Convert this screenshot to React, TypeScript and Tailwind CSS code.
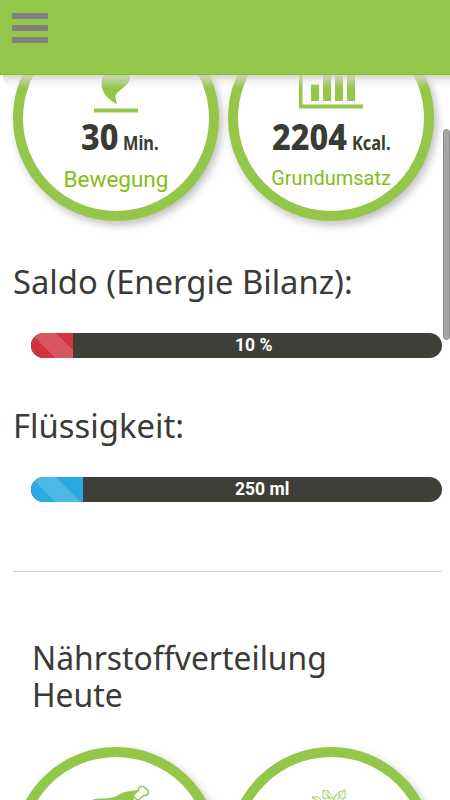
import type { ReactNode } from "react";

const stripes =
  "bg-[linear-gradient(45deg,rgba(255,255,255,0.17)_25%,transparent_25%,transparent_50%,rgba(255,255,255,0.17)_50%,rgba(255,255,255,0.17)_75%,transparent_75%)] bg-[length:50px_50px]";

const heading =
  "w-max origin-left font-['Noto_Sans',sans-serif] text-[33.500px] whitespace-nowrap";

function Circle({ children }: { children?: ReactNode }) {
  return (
    <div className="flex h-[206px] w-[206px] shrink-0 flex-col items-center rounded-full border-[10px] border-[#94c64a] bg-white shadow-[3px_4px_8px_rgba(0,0,0,0.25)]">
      {children}
    </div>
  );
}

function FlameIcon() {
  return (
    <svg className="mt-[29px] h-[60px] w-[46px] shrink-0" viewBox="0 0 46 60" fill="#94c64a">
      <path d="M24.500 50.500C15 45.500 8.500 39 8.500 30C8.500 25 10 22 13 19C17 14 20 9 20 3C27 10 36 14 37 22C37.500 33 22.500 36 22.500 43C22.500 46 23.500 48 24.500 50.500Z" />
      <path d="M1 54.600H45V58.600H1Z" />
    </svg>
  );
}

function ChartIcon() {
  return (
    <svg className="mt-[29px] h-[60px] w-[66px] shrink-0" viewBox="0 0 66 60" fill="#94c64a">
      <path d="M1 3H4.500V50.500H65V54.500H1Z" />
      <path d="M13 30.500H21V47H13ZM25 12H33V47H25ZM37 22H45V47H37ZM49 10H57V47H49Z" />
    </svg>
  );
}

function ProgressBar({ label, percent, color }: { label: string; percent: number; color: string }) {
  return (
    <div className="relative ml-[18px] h-[25px] overflow-hidden rounded-full bg-[#3f3f39]">
      <div className={`h-full ${color} ${stripes}`} style={{ width: `${percent}%` }} />
      <span className="absolute inset-0 pl-[204px] text-[17.500px] leading-[24px] font-bold whitespace-nowrap text-white">
        {label}
      </span>
    </div>
  );
}

export default function App() {
  return (
    <div className="relative h-[800px] w-[450px] overflow-hidden bg-white font-[Roboto,sans-serif] text-[#3a3b35]">
      <header className="relative z-10 h-[75px] border-b border-[#84bd18] bg-[#94c64a] px-[12px] pt-[13px]">
        <button className="flex w-9 flex-col gap-[6px]" aria-label="Menu">
          <span className="h-[6px] w-full rounded-[1px] bg-[#808080]" />
          <span className="h-[6px] w-full rounded-[1px] bg-[#808080]" />
          <span className="h-[6px] w-full rounded-[1px] bg-[#808080]" />
        </button>
        <div className="absolute top-[75px] right-0 left-[3px] h-[13px] rounded-bl-xl bg-linear-to-b from-[#d2d2d2]/85 via-[#dedede]/40 to-transparent" />
      </header>

      <main className="pr-[8px] pl-[13px]">
        <section className="-mt-[60px] flex gap-[9px]">
          <Circle>
            <FlameIcon />
            <p className="mt-[1px] flex h-[46px] items-baseline gap-[5px] pl-2 font-['Noto_Sans',sans-serif] font-extrabold whitespace-nowrap">
              <span className="inline-block w-[37px]">
                <span className="inline-block origin-left scale-x-[0.9] text-[36px] leading-[44px]">30</span>
              </span>
              <span className="inline-block w-[36px]">
                <span className="inline-block origin-left scale-x-[0.86] text-[19px] font-bold">Min.</span>
              </span>
            </p>
            <p className="text-[22.500px] leading-[36px] text-[#84bd18]">Bewegung</p>
          </Circle>
          <Circle>
            <ChartIcon />
            <p className="mt-[1px] flex h-[46px] items-baseline gap-[4px] font-['Noto_Sans',sans-serif] font-extrabold whitespace-nowrap">
              <span className="inline-block w-[76px]">
                <span className="inline-block origin-left scale-x-[0.9] text-[36px] leading-[44px]">2204</span>
              </span>
              <span className="inline-block w-[39px]">
                <span className="inline-block origin-left scale-x-[0.86] text-[19px] font-bold">Kcal.</span>
              </span>
            </p>
            <p className="scale-x-[0.95] text-[21px] leading-[34px] text-[#84bd18]">Grundumsatz</p>
          </Circle>
        </section>

        <h2 className={`${heading} mt-[40px] mb-[32px] scale-x-[0.978] leading-[40px]`}>
          Saldo (Energie Bilanz):
        </h2>
        <ProgressBar label="10 %" percent={10.2} color="bg-[#d0343e]" />

        <h2 className={`${heading} mt-[47px] mb-[32px] scale-x-[0.98] leading-[40px]`}>
          Flüssigkeit:
        </h2>
        <ProgressBar label="250 ml" percent={12.6} color="bg-[#29aae1]" />

        <hr className="mt-[69px] border-[#cfcfcf]" />

        <h2 className={`${heading} mt-[67px] mb-[34px] ml-[19px] scale-x-[0.95] leading-[37px]`}>
          Nährstoffverteilung
          <br />
          Heute
        </h2>

        <section className="flex gap-[9px]">
          <Circle>
            <svg className="mt-[26px] h-[60px] w-[80px]" viewBox="0 0 80 60" fill="#94c64a">
              <path d="M6 28C9 20 14 17 19 16C25 15 32 16 38 14C44 12 46 9 51 8.500C55 8 58 7.500 61 7L60 14C51 22 44 36 30 43C16 50 2 42 6 28Z" />
              <path
                d="M57 12.500L62.500 7.500C62 4 65 2.500 68 3.800C69 5 70 6 72 7.500C73.500 10 71.500 12.500 68 12.500C66 13.500 64.500 16 61.500 17Q58 14.500 57 12.500Z"
                fill="white"
                stroke="#94c64a"
                strokeWidth="1.500"
              />
            </svg>
          </Circle>
          <Circle>
            <svg
              className="mt-[32px] h-[50px] w-[50px]"
              viewBox="0 0 50 50"
              fill="none"
              stroke="#94c64a"
              strokeWidth="0.800"
            >
              <path d="M28 40V12M17 1L22 2L27 8L28 14M17 1V9L23 14L28 18M17 1L28 15M22 2V8L27 9M17 9H23M39 1L33 3L29 8L28 14M39 1V9L33 13L28 18M39 1L28 15M33 3V9H39M28 8L31 5M6 8L12 8L16 12M6 8L9 13L15 14M6 8L16 14M17 12L23 17M39 12L33 16" />
            </svg>
          </Circle>
        </section>
      </main>

      <div className="absolute top-[129px] right-0 z-20 h-[211px] w-[7px] rounded-full border border-[#8b8b8b] bg-[#a5a5a5]" />
    </div>
  );
}
